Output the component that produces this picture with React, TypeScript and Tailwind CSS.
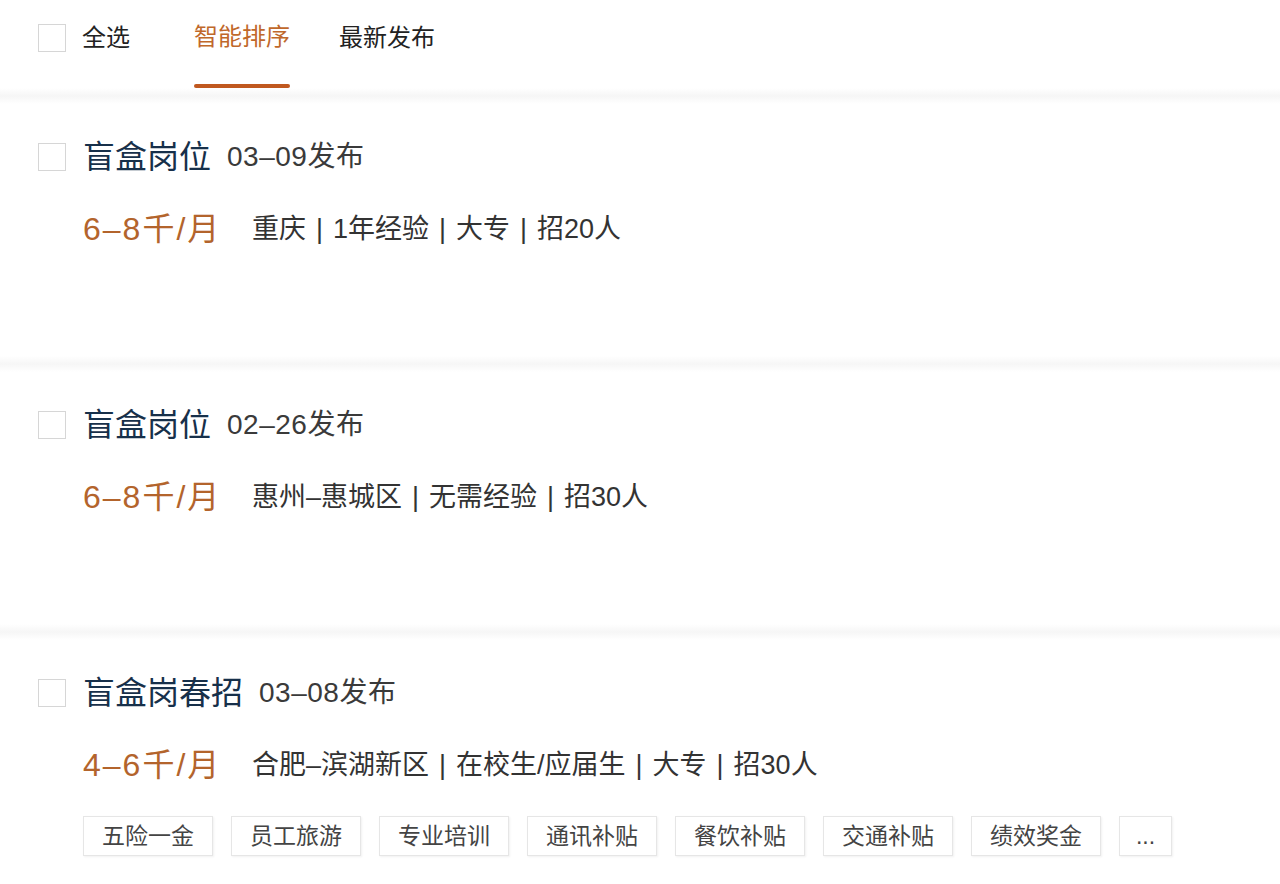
import React from "react";

const font = { fontFamily: '"Liberation Sans", "Noto Sans CJK SC", sans-serif' };

function Box() {
  return <div className="w-[28px] h-[28px] border-[1.5px] border-[#d6d6d6] bg-white shrink-0" />;
}

function Separator() {
  return <div className="h-[16px] bg-gradient-to-b from-white via-[#f6f6f6] to-white" />;
}

type Job = { title: string; date: string; salary: string; info: string[]; tags?: string[] };

const jobs: Job[] = [
  { title: "盲盒岗位", date: "03–09发布", salary: "6–8千/月", info: ["重庆", "1年经验", "大专", "招20人"] },
  { title: "盲盒岗位", date: "02–26发布", salary: "6–8千/月", info: ["惠州–惠城区", "无需经验", "招30人"] },
  {
    title: "盲盒岗春招",
    date: "03–08发布",
    salary: "4–6千/月",
    info: ["合肥–滨湖新区", "在校生/应届生", "大专", "招30人"],
    tags: ["五险一金", "员工旅游", "专业培训", "通讯补贴", "餐饮补贴", "交通补贴", "绩效奖金", "..."],
  },
];

function Card({ job }: { job: Job }) {
  return (
    <div className="h-[252px] pt-[33px]">
      <div className="flex items-center h-[40px]">
        <div className="w-[83px] pl-[38px] flex items-center">
          <Box />
        </div>
        <span className="text-[32px] leading-[40px] text-[#17304a]">{job.title}</span>
        <span className="ml-[16px] text-[28px] leading-[40px] tracking-[0.5px] text-[#3a3a3a]">{job.date}</span>
      </div>
      <div className="flex items-center h-[40px] mt-[32px] pl-[83px]">
        <span className="w-[169px] text-[32px] leading-[40px] tracking-[2px] text-[#b3642c]">{job.salary}</span>
        <span className="text-[27px] leading-[40px] text-[#333333]">
          {job.info.map((s, i) => (
            <React.Fragment key={i}>
              {i > 0 && <span className="mx-[10px]">|</span>}
              {s}
            </React.Fragment>
          ))}
        </span>
      </div>
      {job.tags && (
        <div className="flex gap-[18px] mt-[31px] pl-[83px]">
          {job.tags.map((t, i) => (
            <div
              key={i}
              className={`h-[40px] flex items-center justify-center bg-white border border-[#e6e6e6] shadow-[1px_1px_2px_rgba(0,0,0,0.06)] text-[23px] text-[#444444] ${
                t === "..." ? "w-[53px]" : "w-[130px]"
              }`}
            >
              {t}
            </div>
          ))}
        </div>
      )}
    </div>
  );
}

export default function App() {
  return (
    <div className="w-[1280px] h-[884px] bg-white overflow-hidden" style={font}>
      <div className="h-[88px] flex items-start">
        <div className="flex items-center h-[76px] pl-[38px]">
          <Box />
          <span className="ml-[16px] text-[24px] text-[#222222] -mt-[1px]">全选</span>
        </div>
        <div className="ml-[64px] h-[88px] flex flex-col items-center">
          <span className="h-[76px] flex items-center text-[24px] text-[#c0682b] -mt-[1px]">智能排序</span>
          <div className="mt-[9px] w-[96px] h-[4px] bg-[#c0581f] rounded-full" />
        </div>
        <div className="ml-[49px] h-[76px] flex items-center">
          <span className="text-[24px] text-[#222222] -mt-[1px]">最新发布</span>
        </div>
      </div>
      <Separator />
      <Card job={jobs[0]} />
      <Separator />
      <Card job={jobs[1]} />
      <Separator />
      <Card job={jobs[2]} />
    </div>
  );
}
